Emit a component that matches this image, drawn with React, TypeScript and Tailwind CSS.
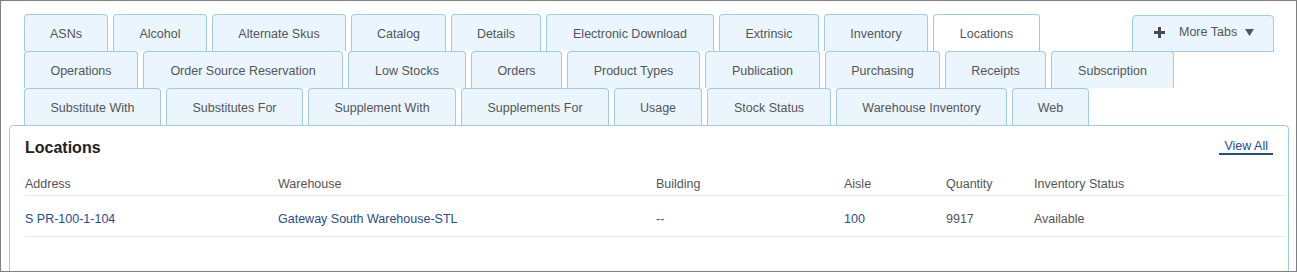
import React from "react";

type Tab = { label: string; w: number; active?: boolean };

const rows: Tab[][] = [
  [
    { label: "ASNs", w: 84 },
    { label: "Alcohol", w: 94 },
    { label: "Alternate Skus", w: 134 },
    { label: "Catalog", w: 95 },
    { label: "Details", w: 90 },
    { label: "Electronic Download", w: 168 },
    { label: "Extrinsic", w: 100 },
    { label: "Inventory", w: 104 },
    { label: "Locations", w: 107, active: true },
  ],
  [
    { label: "Operations", w: 114 },
    { label: "Order Source Reservation", w: 200 },
    { label: "Low Stocks", w: 118 },
    { label: "Orders", w: 91 },
    { label: "Product Types", w: 133 },
    { label: "Publication", w: 115 },
    { label: "Purchasing", w: 115 },
    { label: "Receipts", w: 101 },
    { label: "Subscription", w: 123 },
  ],
  [
    { label: "Substitute With", w: 137 },
    { label: "Substitutes For", w: 137 },
    { label: "Supplement With", w: 148 },
    { label: "Supplements For", w: 148 },
    { label: "Usage", w: 88 },
    { label: "Stock Status", w: 124 },
    { label: "Warehouse Inventory", w: 171 },
    { label: "Web", w: 77 },
  ],
];

function TabItem({ t }: { t: Tab }) {
  return (
    <div
      style={{ width: t.w }}
      className={
        "h-[37px] shrink-0 flex items-center justify-center whitespace-nowrap border-t border-l border-r border-[#9fcbe9] rounded-t-[4px] text-[12.5px] text-[#555555] pt-[3px] " +
        (t.active ? "bg-white" : "bg-[#eaf5fd]")
      }
    >
      {t.label}
    </div>
  );
}

function MoreTabs() {
  return (
    <div className="ml-auto mt-[1px] -mb-[1px] w-[142px] shrink-0 h-[37px] flex items-center whitespace-nowrap border border-[#9fcbe9] rounded-t-[4px] bg-[#eaf5fd] text-[12.5px] text-[#555555]">
      <svg width="11" height="11" viewBox="0 0 11 11" className="ml-[21px] mb-[3px] shrink-0">
        <rect x="4" y="0" width="3" height="11" fill="#4a4a4a" />
        <rect x="0" y="4" width="11" height="3" fill="#4a4a4a" />
      </svg>
      <span className="ml-[14px] mb-[2px]">More Tabs</span>
      <svg width="9" height="7" viewBox="0 0 9 7" className="ml-[8px] mb-[3px] shrink-0">
        <polygon points="0,0 9,0 4.5,7" fill="#555555" />
      </svg>
    </div>
  );
}

export default function App() {
  return (
    <div
      className="w-[1297px] h-[272px] overflow-hidden border border-[#7f7f7f] bg-white"
      style={{ fontFamily: '"Liberation Sans", Arial, sans-serif' }}
    >
      <div className="flex flex-col pt-[13px] pl-[23px] pr-[22px]">
        {rows.map((r, i) => (
          <div key={i} className="flex items-start gap-[5px]">
            {r.map((t) => (
              <TabItem key={t.label} t={t} />
            ))}
            {i === 0 && <MoreTabs />}
          </div>
        ))}
      </div>
      <div className="ml-[8px] mr-[7px] h-[200px] border border-[#9fcbe9] rounded-t-[4px] bg-white">
        <div className="flex items-start pl-[15px] pr-[15px] pt-[12px]">
          <div className="text-[16px] leading-[20px] font-bold text-[#222222]">Locations</div>
          <div className="ml-auto mt-[1px] px-[5px] text-[12.5px] leading-[14px] text-[#1f4d8d] border-b-2 border-[#1f4d8d]">
            View All
          </div>
        </div>
        <div className="pl-[15px] pr-[3px]">
          <div className="grid grid-cols-[253px_378px_188px_102px_88px_1fr] mt-[18px] pb-[3px] border-b border-[#e6e6e6] text-[12.5px] leading-[16px] text-[#555555]">
            <div>Address</div>
            <div>Warehouse</div>
            <div>Building</div>
            <div>Aisle</div>
            <div>Quantity</div>
            <div>Inventory Status</div>
          </div>
          <div className="grid grid-cols-[253px_378px_188px_102px_88px_1fr] pt-[15px] pb-[9px] border-b border-[#e6e6e6] text-[12.5px] leading-[16px] text-[#555555]">
            <div className="text-[#1f4d8d]">S PR-100-1-104</div>
            <div className="text-[#1f4d8d]">Gateway South Warehouse-STL</div>
            <div>--</div>
            <div className="text-[#1f4d8d]">100</div>
            <div>9917</div>
            <div>Available</div>
          </div>
        </div>
      </div>
    </div>
  );
}
